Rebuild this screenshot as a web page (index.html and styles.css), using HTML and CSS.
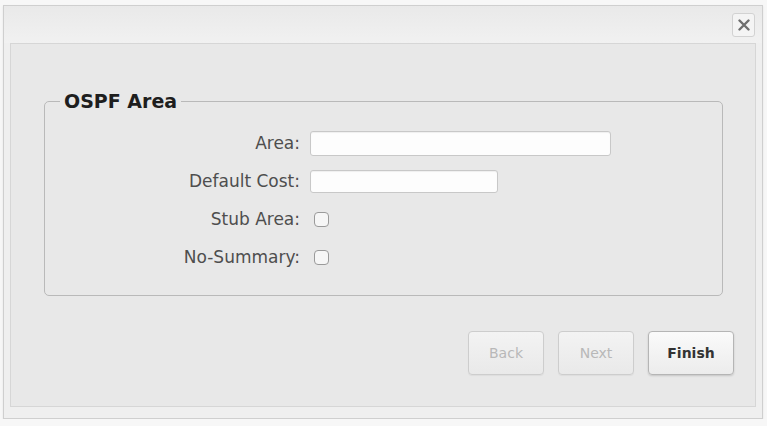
FILE: index.html
```html
<!DOCTYPE html>
<html lang="en">
<head>
  <meta charset="UTF-8">
  <title>OSPF Area</title>
  <link rel="stylesheet" href="styles.css">
</head>
<body>
  <div class="window">
    <div class="titlebar">
      <button class="close-btn" title="Close">
        <svg width="12" height="12" viewBox="0 0 12 12"><path d="M1.5 1.5 L10.5 10.5 M10.5 1.5 L1.5 10.5" stroke="#6e6e6e" stroke-width="2.4" stroke-linecap="round"/></svg>
      </button>
    </div>
    <div class="content">
      <fieldset class="area-box">
        <legend>OSPF Area</legend>
        <div class="form-grid">
          <label class="field-label">Area:</label>
          <div class="field"><input type="text" class="text-input wide"></div>

          <label class="field-label">Default Cost:</label>
          <div class="field"><input type="text" class="text-input short"></div>

          <label class="field-label">Stub Area:</label>
          <div class="field"><input type="checkbox" class="check"></div>

          <label class="field-label">No-Summary:</label>
          <div class="field"><input type="checkbox" class="check"></div>
        </div>
      </fieldset>

      <div class="buttons">
        <button class="btn" disabled>Back</button>
        <button class="btn" disabled>Next</button>
        <button class="btn btn-finish">Finish</button>
      </div>
    </div>
  </div>
</body>
</html>
```

FILE: styles.css
```css
body {
  margin: 0;
  padding: 0;
  background: #f7f7f7;
  font-family: "DejaVu Sans", Verdana, sans-serif;
}
.window {
  margin: 5px 0 0 3px;
  width: 760px;
  height: 414px;
  border: 1px solid #cfcfcf;
  background: #efefef;
  padding: 0 6px;
  box-sizing: border-box;
  box-shadow: 0 1px 2px rgba(0,0,0,0.08);
}
.titlebar {
  height: 37px;
  display: flex;
  justify-content: flex-end;
  align-items: center;
  background: linear-gradient(#e9e9e9, #f1f1f1);
  margin: 0 -6px;
  padding: 0 7px;
}
.close-btn {
  width: 23px;
  height: 24px;
  padding: 0;
  border: 1px solid #d2d2d2;
  border-radius: 3px;
  background: #f4f4f4;
  display: flex;
  align-items: center;
  justify-content: center;
}
.content {
  height: 364px;
  box-sizing: border-box;
  border: 1px solid #d6d6d6;
  background: #e8e8e8;
  padding: 47px 32px 0 33px;
}
.area-box {
  margin: 0;
  border: 1px solid #b9b9b9;
  border-radius: 5px;
  padding: 13px 10px 19px 10px;
}
.area-box legend {
  font-size: 19px;
  font-weight: bold;
  color: #1e1e1e;
  padding: 0 4px;
  margin-left: 5px;
  line-height: 20px;
}
.form-grid {
  display: grid;
  grid-template-columns: 245px 1fr;
  grid-auto-rows: 38px;
  column-gap: 10px;
  align-items: center;
}
.field-label {
  text-align: right;
  font-size: 17px;
  color: #4e4e4e;
}
.field {
  display: flex;
  align-items: center;
}
.text-input {
  box-sizing: border-box;
  border: 1px solid #c8c8c8;
  border-radius: 3px;
  background: #fdfdfd;
  box-shadow: inset 0 1px 1px rgba(0,0,0,0.06);
  margin: 0;
}
.text-input.wide {
  width: 301px;
  height: 25px;
}
.text-input.short {
  width: 188px;
  height: 23px;
}
.check {
  appearance: none;
  -webkit-appearance: none;
  width: 15px;
  height: 15px;
  margin: 0 0 0 4px;
  border: 1px solid #9a9a9a;
  border-radius: 4px;
  background: #f6f6f6;
}
.buttons {
  display: flex;
  justify-content: flex-end;
  gap: 14px;
  margin: 35px -11px 0 0;
}
.btn {
  width: 76px;
  height: 44px;
  border: 1px solid #cdcdcd;
  border-radius: 4px;
  background: linear-gradient(#f3f3f3, #e9e9e9);
  font-family: "DejaVu Sans", sans-serif;
  font-size: 14px;
  color: #b8b8b8;
  box-shadow: 0 1px 1px rgba(0,0,0,0.05);
}
.btn-finish {
  width: 86px;
  border-color: #b5b5b5;
  background: linear-gradient(#fafafa, #ececec);
  color: #333;
  font-weight: bold;
  box-shadow: 0 1px 2px rgba(0,0,0,0.15);
}
```
